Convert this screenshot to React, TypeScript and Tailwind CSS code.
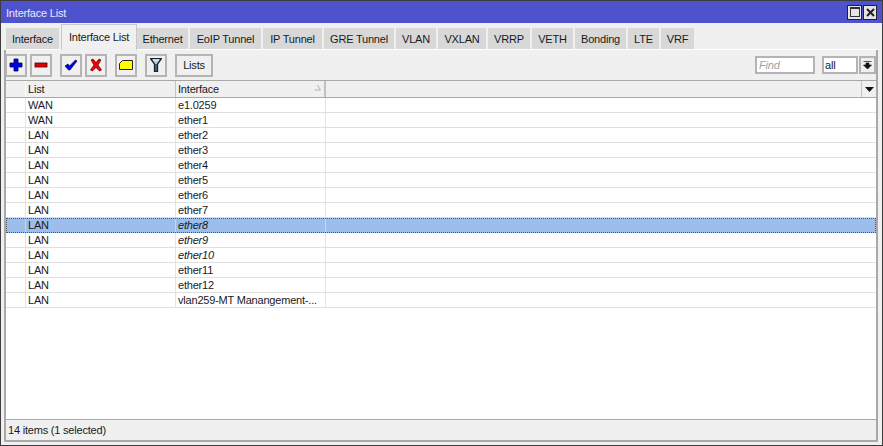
const TABS = [
  { label: 'Interface', width: 'w-[55px]' },
  { label: 'Interface List', width: 'w-[76px]', active: true },
  { label: 'Ethernet', width: 'w-[53px]' },
  { label: 'EoIP Tunnel', width: 'w-[73px]' },
  { label: 'IP Tunnel', width: 'w-[61px]' },
  { label: 'GRE Tunnel', width: 'w-[72px]' },
  { label: 'VLAN', width: 'w-[42px]' },
  { label: 'VXLAN', width: 'w-[50px]' },
  { label: 'VRRP', width: 'w-[44px]' },
  { label: 'VETH', width: 'w-[43px]' },
  { label: 'Bonding', width: 'w-[53px]' },
  { label: 'LTE', width: 'w-[33px]' },
  { label: 'VRF', width: 'w-[35px]' },
];

const ROWS = [
  { list: 'WAN', name: 'e1.0259' },
  { list: 'WAN', name: 'ether1' },
  { list: 'LAN', name: 'ether2' },
  { list: 'LAN', name: 'ether3' },
  { list: 'LAN', name: 'ether4' },
  { list: 'LAN', name: 'ether5' },
  { list: 'LAN', name: 'ether6' },
  { list: 'LAN', name: 'ether7' },
  { list: 'LAN', name: 'ether8', italic: true, selected: true },
  { list: 'LAN', name: 'ether9', italic: true },
  { list: 'LAN', name: 'ether10', italic: true },
  { list: 'LAN', name: 'ether11' },
  { list: 'LAN', name: 'ether12' },
  { list: 'LAN', name: 'vlan259-MT Manangement-...' },
];

function ToolButton({ children, className = 'w-[22px]' }: { children: React.ReactNode; className?: string }) {
  return (
    <button
      type="button"
      className={`flex h-[23px] items-center justify-center border-2 border-[#b4b4b4] bg-[#f0f0f0] ${className}`}
    >
      {children}
    </button>
  );
}

function Icon({ children }: { children: React.ReactNode }) {
  return (
    <svg width="14" height="14" viewBox="0 0 14 14">
      {children}
    </svg>
  );
}

export default function App() {
  return (
    <div className="flex h-[446px] w-[883px] flex-col overflow-hidden border border-[#3c3c3c] bg-[#f0f0f0] font-['Liberation_Sans',sans-serif] text-[11px] tracking-[-0.2px] whitespace-nowrap text-[#1a1a1a]">
      <div className="flex h-[22px] shrink-0 items-center justify-between bg-[#4f52cd] pl-[5px] pr-[5px]">
        <span className="mt-[3px] text-[#e8e8f8]">Interface List</span>
        <div className="flex gap-px">
          <button type="button" className="flex h-[15px] w-[15px] items-center justify-center border border-[#222] bg-[#e4e4e4]">
            <span className="block h-[10px] w-[10px] border border-t-2 border-[#333]" />
          </button>
          <button type="button" className="flex h-[15px] w-[14px] items-center justify-center border border-[#222] bg-[#e4e4e4]">
            <svg width="9" height="9" viewBox="0 0 9 9">
              <path d="M1 1 L8 8 M8 1 L1 8" stroke="#222" strokeWidth="2" />
            </svg>
          </button>
        </div>
      </div>

      <div className="flex min-h-0 flex-1 flex-col pl-[3px] pr-[4px]">
        <div className="flex h-[27px] shrink-0 items-end pl-[2px]">
          {TABS.map((tab) =>
            tab.active ? (
              <div
                key={tab.label}
                className={`flex h-[26px] items-center justify-center border-x border-t border-[#c8c8c8] bg-[#f0f0f0] ${tab.width}`}
              >
                {tab.label}
              </div>
            ) : (
              <div
                key={tab.label}
                className={`flex h-[22px] items-center justify-center border-r-2 border-b border-r-[#f0f0f0] border-b-[#ffffff] bg-[#d8d8d8] pt-[2px] ${tab.width}`}
              >
                {tab.label}
              </div>
            ),
          )}
          <div className="h-px flex-1 self-end bg-white" />
        </div>

        <div className="flex min-h-0 flex-1 flex-col border-l-2 border-r-2 border-b-2 border-[#a9a9a9]">
          <div className="-ml-px flex h-[30px] shrink-0 items-center">
            <div className="flex items-center">
              <ToolButton>
                <Icon>
                  <path d="M5 1 H9 V5 H13 V9 H9 V13 H5 V9 H1 V5 H5 Z" fill="#0000e0" stroke="#000050" strokeWidth="0.8" />
                </Icon>
              </ToolButton>
              <ToolButton className="ml-[3px] w-[22px]">
                <Icon>
                  <rect x="1" y="5" width="12" height="4" fill="#e00000" stroke="#500000" strokeWidth="0.8" />
                </Icon>
              </ToolButton>
              <ToolButton className="ml-[8px] w-[22px]">
                <Icon>
                  <path d="M1 8 L4 6 L5.5 8 L11.5 2 L13 3 L6 12 L4.5 12 Z" fill="#0000e0" stroke="#000050" strokeWidth="0.7" />
                </Icon>
              </ToolButton>
              <ToolButton className="ml-[3px] w-[22px]">
                <Icon>
                  <path d="M2 2 L4 1 L7 4.5 L10 1 L12 2 L9 7 L12.5 12 L10.5 13 L7 9.5 L3.5 13 L1.5 12 L5 7 Z" fill="#f00000" stroke="#600000" strokeWidth="0.7" />
                </Icon>
              </ToolButton>
              <ToolButton className="ml-[8px] w-[22px]">
                <svg width="14" height="10" viewBox="0 0 14 10">
                  <path d="M0.5 3.5 L3.5 0.5 H13.5 V9.5 H0.5 Z" fill="#ffff00" stroke="#222" strokeWidth="1" />
                </svg>
              </ToolButton>
              <ToolButton className="ml-[8px] w-[22px]">
                <svg width="12" height="14" viewBox="0 0 12 14">
                  <path d="M0.5 0.5 H11.5 L7.5 6 V13.5 H4.5 V6 Z" fill="#b8cce0" stroke="#1a2230" strokeWidth="1.3" />
                  <path d="M3 2 H9" stroke="#fff" strokeWidth="1" />
                  <path d="M6 6 V13" stroke="#20406a" strokeWidth="1.5" />
                </svg>
              </ToolButton>
              <ToolButton className="ml-[8px] w-[38px]">Lists</ToolButton>
            </div>
            <div className="ml-auto flex items-center">
              <div className="flex h-[18px] w-[60px] items-center border-2 border-[#b4b4b4] bg-white pl-[2px] italic text-[#a0a0a0]">
                Find
              </div>
              <div className="ml-[7px] flex h-[18px] w-[36px] items-center border-2 border-[#b4b4b4] bg-white pl-[1px]">all</div>
              <div className="ml-px flex h-[18px] w-[17px] items-center justify-center border-2 border-[#b4b4b4]">
                <svg width="9" height="9" viewBox="0 0 9 9">
                  <path d="M0.5 0.5 H8.5 M3 2 H6 V4 H8.5 L4.5 8 L0.5 4 H3 Z" fill="#111" stroke="#111" strokeWidth="0.7" />
                </svg>
              </div>
            </div>
          </div>

          <div className="flex min-h-0 flex-1 flex-col border-y border-[#a8a8a8] bg-white">
            <div className="flex h-[16px] shrink-0 bg-[#f0f0f0]">
              <div className="w-[20px] border-r border-white" />
              <div className="flex w-[150px] items-center border-r border-[#c4c4c4] pl-[2px]">List</div>
              <div className="relative flex w-[150px] items-center border-r-2 border-[#c0c0c0] pl-[2px]">
                Interface
                <svg className="absolute right-[3px] top-[3px]" width="7" height="7" viewBox="0 0 7 7">
                  <path d="M3.5 1 L6.5 6 H0.5" fill="none" stroke="#b0b0b0" strokeWidth="1" />
                </svg>
              </div>
              <div className="flex-1" />
              <div className="flex w-[15px] items-center justify-center border-l border-[#c4c4c4]">
                <svg width="9" height="5" viewBox="0 0 9 5">
                  <path d="M0 0 H9 L4.5 5 Z" fill="#111" />
                </svg>
              </div>
            </div>
            <div className="min-h-0 flex-1 border-t border-[#a8a8a8]">
              {ROWS.map((row, i) => (
                <div
                  key={i}
                  className={`flex h-[15px] items-center border-b leading-[14px] ${
                    row.selected
                      ? 'border-transparent bg-[#9dbeea] outline-1 -outline-offset-1 outline-[#555] outline-dotted'
                      : 'border-[#e0e0e0]'
                  }`}
                >
                  <div className={`h-full w-[20px] border-r ${row.selected ? 'border-[#c4d7f2]' : 'border-[#e4e4e4]'}`} />
                  <div className={`flex h-full w-[150px] items-center border-r pl-[2px] ${row.selected ? 'border-[#c4d7f2]' : 'border-[#e4e4e4]'}`}>
                    {row.list}
                  </div>
                  <div className={`flex h-full w-[150px] items-center border-r pl-[2px] ${row.italic ? 'italic' : ''} ${row.selected ? 'border-[#c4d7f2]' : 'border-[#e4e4e4]'}`}>
                    {row.name}
                  </div>
                </div>
              ))}
            </div>
          </div>

          <div className="flex h-[20px] shrink-0 items-center pl-[2px]">14 items (1 selected)</div>
        </div>
        <div className="h-[3px] shrink-0" />
      </div>
    </div>
  );
}
